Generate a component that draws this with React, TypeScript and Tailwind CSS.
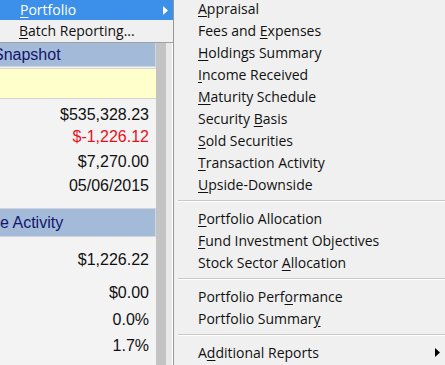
import { ReactNode } from "react";

type Item = { label: string; key: number; sub?: boolean };

const groups: Item[][] = [
  [
    { label: "Appraisal", key: 0 },
    { label: "Fees and Expenses", key: 9 },
    { label: "Holdings Summary", key: 0 },
    { label: "Income Received", key: 0 },
    { label: "Maturity Schedule", key: 0 },
    { label: "Security Basis", key: 9 },
    { label: "Sold Securities", key: 0 },
    { label: "Transaction Activity", key: 0 },
    { label: "Upside-Downside", key: 0 },
  ],
  [
    { label: "Portfolio Allocation", key: 0 },
    { label: "Fund Investment Objectives", key: 0 },
    { label: "Stock Sector Allocation", key: 13 },
  ],
  [
    { label: "Portfolio Performance", key: 14 },
    { label: "Portfolio Summary", key: 16 },
  ],
  [{ label: "Additional Reports", key: 1, sub: true }],
];

function Accel({ label, k }: { label: string; k: number }) {
  return (
    <>
      {label.slice(0, k)}
      <u className="underline-offset-[1.5px]">{label[k]}</u>
      {label.slice(k + 1)}
    </>
  );
}

function Arrow({ color }: { color: string }) {
  return (
    <svg width="5" height="9" viewBox="0 0 5 9" className="shrink-0">
      <path d="M0 0 L5 4.5 L0 9 Z" fill={color} />
    </svg>
  );
}

function Value({ children, h, red }: { children: ReactNode; h: string; red?: boolean }) {
  return (
    <div className={`flex items-center justify-end pr-[7px] ${h} ${red ? "text-[#e8101c]" : "text-[#111]"}`}>
      {children}
    </div>
  );
}

function Band({ children, className }: { children: ReactNode; className?: string }) {
  return (
    <div className={`flex items-center overflow-hidden whitespace-nowrap border border-l-0 border-[#d2d6dc] bg-[#a3bbd8] text-[#14146e] ${className ?? ""}`}>
      {children}
    </div>
  );
}

export default function App() {
  return (
    <div
      className="flex h-[365px] w-[445px] overflow-hidden bg-[#f0f0f0] text-[14px]"
      style={{ fontFamily: '"Open Sans", "Noto Sans", sans-serif' }}
    >
      {/* left: parent menu + report panel */}
      <div className="flex w-[173px] shrink-0 flex-col">
        <div className="flex h-[43px] flex-col border-b border-[#a0a0a0] bg-[#f0f0f0] text-[#111]">
          <div className="flex h-[20px] items-center justify-between bg-[#3c90ea] pl-[20px] pr-[5px] text-white">
            <span className="-mt-[1px]"><Accel label="Portfolio" k={0} /></span>
            <Arrow color="#ffffff" />
          </div>
          <div className="flex h-[22px] items-center pl-[19px]">
            <span className="-mt-[1px]"><Accel label="Batch Reporting..." k={0} /></span>
          </div>
        </div>

        <div className="flex flex-1" style={{ fontFamily: '"Liberation Sans", Arial, sans-serif' }}>
          <div className="flex w-[156px] flex-col bg-[#f3f3f3] text-[16px]">
            <Band className="h-[24px] border-t-0">
              <span className="-ml-[7px]">Snapshot</span>
            </Band>
            <div className="mt-[1px] h-[31px] border-y border-[#d4d4d4] bg-[#ffffcc]" />
            <div className="mt-[5px]" />
            <Value h="h-[22px]">$535,328.23</Value>
            <Value h="h-[22px]" red>$-1,226.12</Value>
            <Value h="h-[27px]">$7,270.00</Value>
            <Value h="h-[22px]">05/06/2015</Value>
            <div className="h-[11px]" />
            <Band className="h-[29px]">
              <span className="ml-0">e Activity</span>
            </Band>
            <div className="h-[12px]" />
            <Value h="h-[22px]">$1,226.22</Value>
            <div className="h-[11px]" />
            <Value h="h-[22px]">$0.00</Value>
            <div className="h-[5px]" />
            <Value h="h-[22px]">0.0%</Value>
            <div className="h-[4px]" />
            <Value h="h-[22px]">1.7%</Value>
          </div>
          <div className="w-[10px] bg-[#c3c3c3]" />
          <div className="w-[7px] border-r border-white bg-[#e9e9e9]" />
        </div>
      </div>

      {/* submenu */}
      <div className="flex flex-1 flex-col border-l border-[#979797] bg-[#f0f0f0] text-[#111]">
        <div className="-mt-[3px] flex flex-col">
          {groups.map((g, gi) => (
            <div key={gi} className="flex flex-col">
              {gi > 0 && (
                <div className="flex h-[12px] items-center pl-[4px]">
                  <div className="h-[2px] w-full border-t border-[#c9c9c9] bg-white" />
                </div>
              )}
              {g.map((it) => (
                <div key={it.label} className="flex h-[22px] items-center justify-between pl-[24px] pr-[5px] whitespace-nowrap">
                  <span><Accel label={it.label} k={it.key} /></span>
                  {it.sub && <Arrow color="#000000" />}
                </div>
              ))}
            </div>
          ))}
        </div>
      </div>
    </div>
  );
}
